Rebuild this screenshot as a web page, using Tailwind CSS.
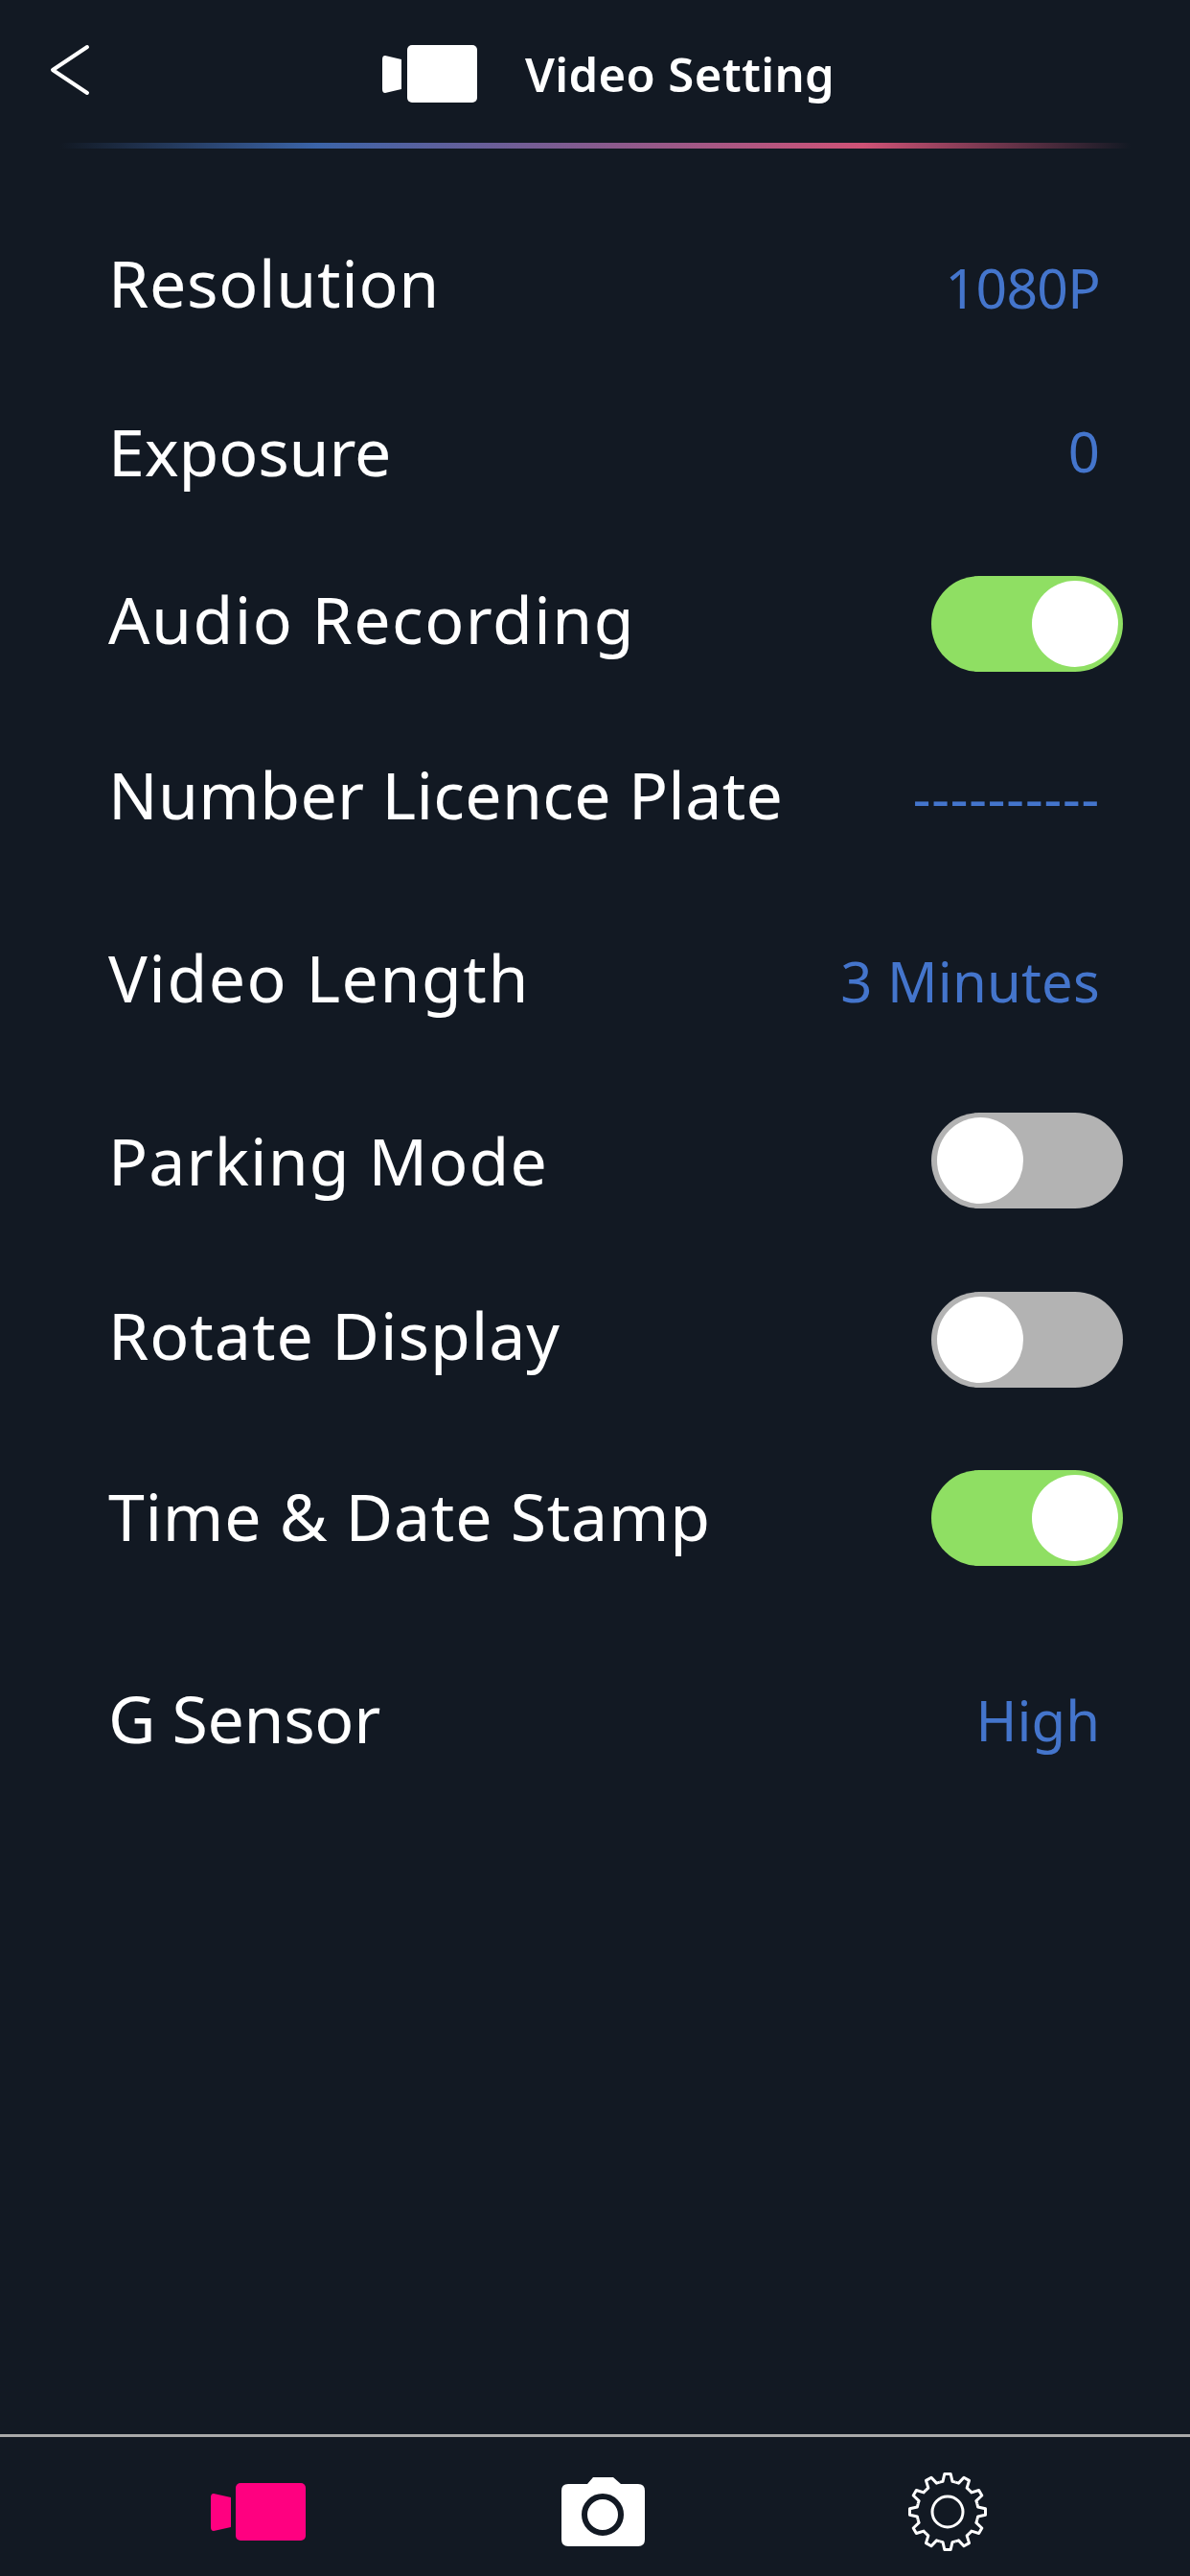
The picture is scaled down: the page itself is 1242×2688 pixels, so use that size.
<!DOCTYPE html>
<html lang="en">
<head>
    <meta charset="UTF-8">
    <meta name="viewport" content="width=device-width, initial-scale=1.0">
    <title>Video Setting</title>
    <script src="https://cdn.jsdelivr.net/npm/@tailwindcss/browser@4"></script>
</head>
<body class="bg-[#121923] font-['Noto_Sans',sans-serif] text-white">
<div class="flex flex-col w-[1242px] h-[2688px]">

    <!-- Header -->
    <header class="relative h-[149px] shrink-0 flex items-start">
        <svg class="absolute left-[50px] top-[46px]" width="46" height="54" viewBox="0 0 46 54" fill="none" stroke="#fff" stroke-width="4" stroke-linecap="round" stroke-linejoin="round"><path d="M41 3 L5 27 L41 51"></path></svg>
        <div class="ml-[399px] mt-[47px] flex items-center">
            <svg width="99" height="60" viewBox="0 0 99 60" fill="#fff"><path d="M3 11 L20 15 V46 L3 50 Q0 50 0 46 V15 Q0 11 3 11 Z"></path><rect x="26" y="0" width="73" height="60" rx="5"></rect></svg>
            <span class="ml-[50px] text-[49px] font-semibold tracking-[0.37px] leading-none">Video Setting</span>
        </div>
    </header>
    <div class="ml-[63px] w-[1117px] h-[6px] shrink-0 bg-[linear-gradient(90deg,#121923_0%,#3b64a8_24%,#cf5276_75%,#121923_100%)]"></div>

    <!-- Settings list -->
    <main class="flex flex-col pl-[113px] pr-[70px] text-[68px]">
        <div class="flex items-center justify-between h-[100px] mt-[92px]">
            <span class="pb-[4px] tracking-[0.67px]">Resolution</span><span class="mr-[24px] pt-[7px] text-[57px] tracking-[-0.7px] text-[#4475cc]">1080P</span>
        </div>
        <div class="flex items-center justify-between h-[100px] mt-[76px]">
            <span class="pb-[4px] tracking-[-0.15px]">Exposure</span><span class="mr-[24px] pb-[5px] text-[58px] text-[#4475cc]">0</span>
        </div>
        <div class="flex items-center justify-between h-[100px] mt-[78px]">
            <span class="pb-[10px] tracking-[1.47px]">Audio Recording</span>
            <div class="flex items-center justify-end w-[200px] h-[100px] pr-[5px] rounded-full bg-[#8fdf63]"><div class="w-[90px] h-[90px] rounded-full bg-white"></div></div>
        </div>
        <div class="flex items-center justify-between h-[100px] mt-[80px]">
            <span class="pb-[4px] tracking-[0.32px]">Number Licence Plate</span><span class="mr-[24px] text-[58px] tracking-[0.85px] text-[#4475cc]">----------</span>
        </div>
        <div class="flex items-center justify-between h-[100px] mt-[91px]">
            <span class="pb-[4px] tracking-[1.52px]">Video Length</span><span class="mr-[24px] pt-[3px] text-[58px] tracking-[0.2px] text-[#4475cc]">3 Minutes</span>
        </div>
        <div class="flex items-center justify-between h-[100px] mt-[89px]">
            <span class="tracking-[1.1px]">Parking Mode</span>
            <div class="flex items-center w-[200px] h-[100px] pl-[6px] rounded-full bg-[#b3b3b3]"><div class="w-[90px] h-[90px] rounded-full bg-white"></div></div>
        </div>
        <div class="flex items-center justify-between h-[100px] mt-[87px]">
            <span class="pb-[10px] tracking-[0.95px]">Rotate Display</span>
            <div class="flex items-center w-[200px] h-[100px] pl-[6px] rounded-full bg-[#b3b3b3]"><div class="w-[90px] h-[90px] rounded-full bg-white"></div></div>
        </div>
        <div class="flex items-center justify-between h-[100px] mt-[86px]">
            <span class="pb-[4px] tracking-[0.74px]">Time &amp; Date Stamp</span>
            <div class="flex items-center justify-end w-[200px] h-[100px] pr-[5px] rounded-full bg-[#8fdf63]"><div class="w-[90px] h-[90px] rounded-full bg-white"></div></div>
        </div>
        <div class="flex items-center justify-between h-[100px] mt-[110px]">
            <span class="pb-[2px] tracking-[-0.35px]">G Sensor</span><span class="mr-[24px] text-[58px] text-[#4475cc]">High</span>
        </div>
    </main>

    <!-- Bottom tabs -->
    <nav class="relative mt-auto h-[148px] shrink-0 border-t-[3px] border-[#a9a9a9]">
        <svg class="absolute left-[220px] top-[48px]" width="99" height="60" viewBox="0 0 99 60" fill="#ff0080"><path d="M3 11 L21 15 V46 L3 50 Q0 50 0 46 V15 Q0 11 3 11 Z"></path><rect x="26" y="0" width="73" height="60" rx="5"></rect></svg>
        <svg class="absolute left-[586px] top-[42px]" width="87" height="72" viewBox="0 0 87 72"><path fill="#fff" fill-rule="evenodd" d="M27 7 L33 0 H54 L62 7 H80 Q87 7 87 14 V65 Q87 72 80 72 H7 Q0 72 0 65 V14 Q0 7 7 7 Z"></path><circle cx="43" cy="39" r="19" fill="none" stroke="#121923" stroke-width="6"></circle></svg>
        <svg class="absolute left-[947px] top-[36px]" width="84" height="84" viewBox="-42 -42 84 84" fill="none" stroke="#fff" stroke-width="3" stroke-linejoin="round">
            <defs><path id="tooth" d="M-8.3 -30.9 L-5 -31.6 L-3.2 -39.5 L3.2 -39.5 L5 -31.6 L8.3 -30.9"></path></defs>
            <use href="#tooth"></use><use href="#tooth" transform="rotate(30)"></use><use href="#tooth" transform="rotate(60)"></use><use href="#tooth" transform="rotate(90)"></use><use href="#tooth" transform="rotate(120)"></use><use href="#tooth" transform="rotate(150)"></use><use href="#tooth" transform="rotate(180)"></use><use href="#tooth" transform="rotate(210)"></use><use href="#tooth" transform="rotate(240)"></use><use href="#tooth" transform="rotate(270)"></use><use href="#tooth" transform="rotate(300)"></use><use href="#tooth" transform="rotate(330)"></use>
            <circle cx="0" cy="0" r="16"></circle>
        </svg>
    </nav>
</div>
</body>
</html>
